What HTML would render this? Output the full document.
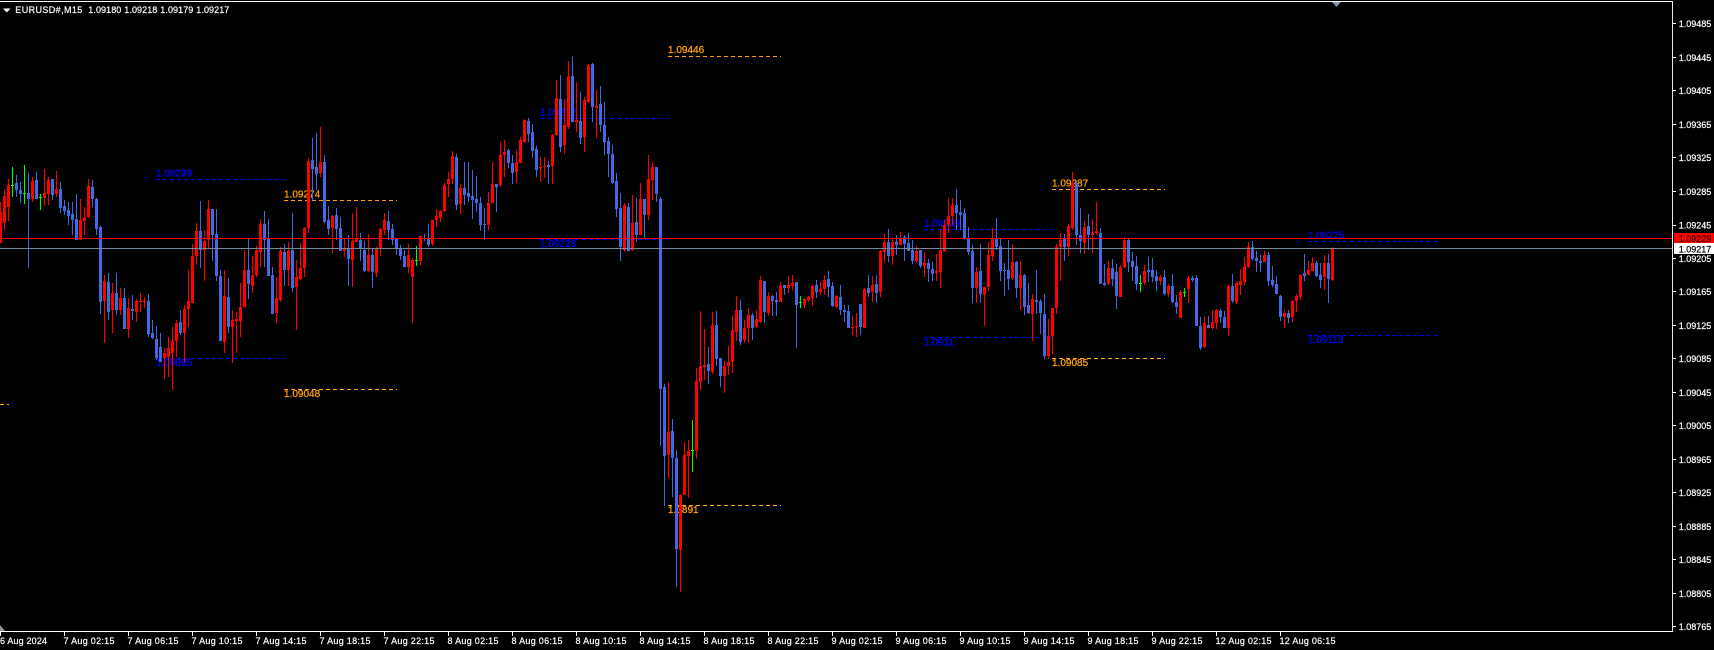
<!DOCTYPE html>
<html><head><meta charset="utf-8"><title>EURUSD#,M15</title>
<style>
html,body{margin:0;padding:0;background:#000;width:1714px;height:650px;overflow:hidden}
svg{display:block}
text{font-family:"Liberation Sans",sans-serif;font-size:9px;fill:currentColor;stroke:currentColor;stroke-width:.2}
.ax{color:#fff}
.lb text{font-size:10px;stroke-width:.25}
path{fill:none}
</style></head><body>
<svg width="1714" height="650" viewBox="0 0 1714 650" xmlns="http://www.w3.org/2000/svg">
<rect width="1714" height="650" fill="#000"/>

<g shape-rendering="crispEdges" stroke-dasharray="4 3" stroke-width="1">
<g stroke="#0000ff"><path d="M156 179.5H284M156 358.5H284M540 118.5H668M540 239.5H668M924 229.5H1052M924 337.5H1052M1308 241.5H1437M1308 335.5H1437"/></g>
<g stroke="#ffa500"><path d="M284 200.5H397M284 389.5H397M668 56.5H781M668 505.5H781M1052 189.5H1165M1052 358.5H1165M0 404.5H9"/></g>
</g>
<g class="lb" style="color:#0000ff">
<text x="156" y="176.5">1.09299</text><text x="156" y="366">1.09085</text><text x="540" y="115.5">1.09372</text><text x="540" y="247">1.09228</text><text x="924" y="226.5">1.09239</text><text x="924" y="345.5">1.0911</text><text x="1308" y="238.5">1.09225</text><text x="1308" y="343">1.09113</text>
</g>
<g class="lb" style="color:#ffa500">
<text x="284" y="197.5">1.09274</text><text x="284" y="397">1.09048</text><text x="668" y="53">1.09446</text><text x="668" y="513">1.0891</text><text x="1052" y="186.5">1.09287</text><text x="1052" y="366">1.09085</text>
</g>

<g shape-rendering="crispEdges" transform="translate(.5,0)">
<path stroke="#4169e1" stroke-width="1" d="M16 175V197M20 182V203M28 173V268M36 172V199M52 179V200M60 182V213M64 200V215M68 202V225M72 202V235M76 194V240M92 180V207M96 198V235M100 226V314M108 273V320M116 273V315M124 288V329M132 295V320M148 294V337M152 320V339M156 326V360M160 333V362M180 310V335M200 201V268M212 209V261M216 209V281M220 270V341M228 278V333M248 239V299M264 211V267M268 219V276M272 267V314M284 244V286M292 213V292M312 138V200M316 133V190M324 155V223M328 206V235M336 208V240M340 217V251M348 235V286M360 233V261M364 241V272M372 248V288M388 211V240M392 224V245M396 239V255M400 245V260M404 250V267M424 234V241M428 224V247M456 154V210M464 162V205M468 162V202M472 170V219M476 176V212M480 197V231M484 208V240M496 184V212M508 149V168M512 155V184M528 118V142M532 124V158M536 146V177M548 161V184M560 75V152M572 56V122M580 92V144M592 63V122M600 86V132M604 102V155M608 137V177M612 145V184M616 173V217M620 193V261M628 203V251M636 198V242M644 199V238M656 167V202M660 197V446M664 384V506M672 419V497M676 450V587M708 347V384M716 311V366M720 358V387M740 300V345M752 313V340M764 281V323M772 295V316M776 292V316M784 285V295M796 282V348M816 280V298M828 271V297M832 282V307M840 285V315M844 305V322M848 305V328M860 304V335M868 275V297M876 275V303M888 229V262M896 235V255M904 235V261M908 233V251M912 240V264M920 250V268M928 259V282M932 262V281M956 189V230M960 200V230M964 208V240M968 227V255M972 245V303M980 244V303M996 218V250M1000 239V281M1004 263V296M1008 240V290M1016 261V298M1024 274V315M1028 283V314M1036 270V314M1040 299V334M1044 294V359M1064 234V261M1076 182V245M1080 208V253M1088 214V250M1100 228V284M1104 264V286M1112 259V286M1116 264V309M1128 239V272M1132 252V281M1136 256V290M1148 257V282M1152 258V282M1156 270V291M1164 270V295M1172 274V303M1176 295V314M1192 276V282M1196 275V326M1200 317V350M1208 316V328M1220 309V323M1224 311V328M1232 274V303M1252 241V260M1256 251V272M1260 255V272M1268 252V286M1272 266V287M1276 276V294M1280 295V321M1288 310V323M1304 254V281M1316 261V277M1320 263V288M1328 254V303"/>
<path stroke="#4169e1" stroke-width="3" d="M16 183V190M20 190V194M28 193V199M36 180V199M52 179V195M60 189V208M64 206V211M68 210V216M72 214V220M76 219V240M92 187V199M96 199V229M100 227V302M108 282V312M116 293V310M124 298V329M132 309V311M148 301V334M152 333V338M156 339V358M160 347V362M180 322V333M200 231V250M212 209V235M216 234V276M220 276V341M228 297V327M248 270V284M264 224V240M268 239V276M272 275V314M284 252V270M292 250V288M312 160V169M316 167V174M324 162V222M328 220V229M336 215V229M340 228V251M348 248V259M360 240V249M364 250V271M372 255V272M388 221V230M392 229V240M396 239V248M400 248V256M404 256V267M424 238V239M428 239V245M456 157V205M464 188V195M468 193V197M472 196V200M476 199V203M480 203V225M484 224V225M496 184V187M508 150V163M512 163V173M528 121V134M532 132V151M536 149V170M548 165V167M560 99V147M572 76V122M580 121V138M592 64V107M600 104V125M604 125V142M608 141V154M612 154V183M616 181V209M620 208V247M628 207V251M636 222V235M644 199V215M656 167V194M660 199V389M664 387V456M672 431V458M676 458V549M708 364V371M716 325V359M720 358V376M740 310V342M752 315V328M764 281V312M772 296V301M776 300V302M784 285V288M796 282V305M816 285V292M828 279V287M832 286V306M840 297V310M844 310V312M848 311V328M860 304V327M868 288V293M876 284V293M888 242V256M896 242V245M904 237V244M908 243V251M912 250V261M920 250V266M928 263V269M932 269V274M956 205V213M960 212V215M964 213V239M968 238V252M972 251V288M980 271V294M996 238V247M1000 246V271M1004 270V271M1008 270V279M1016 262V288M1024 275V307M1028 305V313M1036 300V302M1040 301V313M1044 314V356M1064 239V247M1076 183V235M1080 235V241M1088 226V235M1100 233V284M1104 283V285M1112 268V279M1116 272V296M1128 240V262M1132 261V267M1136 266V284M1148 270V272M1152 270V277M1156 276V281M1164 277V294M1172 286V302M1176 302V307M1192 278V280M1196 278V326M1200 326V348M1208 325V328M1220 311V317M1224 317V328M1232 286V301M1252 247V259M1256 258V261M1260 261V263M1268 255V281M1272 280V285M1276 284V294M1280 296V317M1288 313V318M1304 273V276M1316 263V276M1320 275V280M1328 263V279"/>
<path stroke="#ff0000" stroke-width="1" d="M0 202V243M4 190V230M8 179V221M32 177V202M44 169V206M48 177V205M56 171V197M80 199V240M84 207V235M88 179V218M104 275V343M112 283V333M120 288V315M128 298V338M136 299V322M140 293V312M144 297V308M164 348V379M168 337V377M172 327V390M176 320V357M184 305V362M188 270V327M192 244V303M196 223V265M204 230V281M208 200V248M224 270V353M232 310V363M236 312V353M240 283V337M244 250V307M252 256V293M256 246V277M260 219V267M276 277V323M280 247V302M288 242V286M296 260V330M300 243V280M304 227V277M308 158V233M320 127V177M332 215V253M344 238V257M352 213V287M356 207V242M368 234V272M376 247V277M380 228V256M384 213V235M408 244V273M412 258V323M420 235V265M432 220V246M436 209V227M440 210V222M444 183V212M448 172V197M452 151V184M460 184V214M488 192V230M492 162V203M500 142V187M504 140V177M516 150V183M520 137V163M524 119V143M540 157V182M544 157V178M552 134V184M556 80V136M564 99V154M568 61V129M576 82V132M584 97V152M588 64V103M596 90V138M624 203V252M632 195V251M640 183V235M648 155V220M652 162V200M668 382V478M680 494V592M684 442V495M688 440V498M696 368V459M700 311V390M704 329V380M712 312V374M724 361V393M728 346V375M732 316V373M736 296V341M744 320V343M748 308V343M756 310V328M760 276V323M768 292V316M780 282V302M788 276V293M792 275V290M804 298V308M808 296V302M812 285V306M820 282V295M824 275V295M836 295V308M852 316V335M856 313V337M864 288V328M872 276V302M880 250V297M884 234V262M892 238V265M900 232V245M916 246V263M924 252V277M936 254V281M940 230V288M944 220V252M948 198V233M952 198V225M976 267V303M984 287V326M988 242V291M992 228V261M1012 244V280M1020 261V310M1032 294V341M1048 319V359M1052 308V354M1056 244V314M1060 233V281M1068 224V256M1072 172V230M1084 221V254M1092 219V253M1096 202V235M1108 261V285M1120 265V297M1124 237V268M1144 265V285M1160 275V285M1168 284V297M1180 290V318M1188 276V303M1204 316V348M1212 310V330M1216 309V329M1228 285V336M1236 281V304M1240 269V295M1244 257V285M1248 242V268M1264 251V262M1284 310V328M1292 300V322M1296 294V312M1300 274V300M1308 261V275M1312 257V271M1324 255V290M1332 247V281"/>
<path stroke="#ff0000" stroke-width="3" d="M0 212V243M4 196V223M8 185V207M32 181V199M44 193V198M48 180V194M56 189V194M80 220V240M84 217V221M88 186V217M104 281V301M112 293V310M120 298V310M128 308V329M136 301V312M140 301V302M144 301V302M164 353V358M168 348V357M172 341V353M176 323V341M184 309V333M188 301V309M192 256V303M196 231V256M204 241V250M208 209V240M224 296V342M232 320V327M236 319V321M240 307V321M244 270V307M252 275V286M256 250V275M260 224V252M276 298V313M280 251V300M288 251V270M296 277V287M300 268V279M304 228V268M308 161V228M320 162V173M332 216V228M344 248V251M352 241V260M356 239V242M368 255V271M376 249V273M380 229V249M384 220V230M408 255V267M412 260V277M420 236V261M432 220V244M436 216V220M440 211V218M444 185V211M448 179V184M452 156V179M460 188V204M488 203V225M492 184V203M500 155V185M504 152V155M516 162V172M520 140V163M524 120V142M540 167V168M544 166V167M552 135V166M556 98V135M564 125V145M568 76V127M576 120V122M584 100V137M588 65V102M596 106V108M624 205V250M632 223V250M640 199V235M648 179V215M652 167V180M668 432V455M680 495V550M684 455V495M688 451V456M696 381V451M700 366V382M704 365V367M712 325V372M724 366V376M728 362V366M732 330V362M736 310V332M744 328V340M748 315V328M756 319V327M760 280V322M768 296V313M780 286V302M788 285V288M792 283V286M804 299V305M808 297V300M812 286V298M820 289V292M824 280V289M836 296V307M852 327V328M856 326V327M864 289V328M872 285V292M880 251V292M884 242V252M892 242V256M900 238V245M916 251V261M924 263V266M936 271V273M940 250V272M944 225V251M948 216V225M952 205V216M976 272V288M984 287V295M988 255V287M992 238V256M1012 262V278M1020 275V288M1032 299V314M1048 336V356M1052 308V336M1056 247V308M1060 240V247M1068 226V247M1072 183V228M1084 227V243M1092 233V235M1096 231V233M1108 268V284M1120 267V297M1124 240V267M1144 271V283M1160 277V281M1168 286V294M1180 292V318M1188 278V289M1204 323V347M1212 322V328M1216 310V323M1228 286V328M1236 283V302M1240 281V285M1244 266V282M1248 247V267M1264 255V262M1284 313V317M1292 301V317M1296 296V301M1300 275V297M1308 270V275M1312 263V271M1324 263V277M1332 248V280"/>
<path stroke="#00ff00" stroke-width="1" d="M12 167V197M24 165V204M40 194V210M416 246V266M692 420V472M800 296V308M1140 275V292M1184 288V297"/>
<path stroke="#00ff00" stroke-width="3" d="M12 185V186M24 193V194M40 197V198M416 260V261M692 450V451M800 302V303M1140 283V284M1184 292V293"/>
</g>

<g shape-rendering="crispEdges">
<rect x="0" y="238" width="1673" height="1" fill="#ff0000"/>
<rect x="0" y="248" width="1673" height="1" fill="#778899"/>
<rect x="0" y="1" width="1673" height="1" fill="#fff"/>
<rect x="1672" y="1" width="1" height="631" fill="#e8e8e8"/>
<rect x="0" y="631" width="1673" height="1" fill="#fff"/>
<path stroke="#fff" d="M1673 23.5h3M1673 57.5h3M1673 90.5h3M1673 124.5h3M1673 157.5h3M1673 191.5h3M1673 225.5h3M1673 258.5h3M1673 291.5h3M1673 325.5h3M1673 358.5h3M1673 392.5h3M1673 425.5h3M1673 459.5h3M1673 492.5h3M1673 526.5h3M1673 559.5h3M1673 593.5h3M1673 626.5h3M.5 632V636M64.5 632V636M128.5 632V636M192.5 632V636M256.5 632V636M320.5 632V636M384.5 632V636M448.5 632V636M512.5 632V636M576.5 632V636M640.5 632V636M704.5 632V636M768.5 632V636M832.5 632V636M896.5 632V636M960.5 632V636M1024.5 632V636M1088.5 632V636M1152.5 632V636M1216.5 632V636M1280.5 632V636"/>
<rect x="1674" y="233" width="40" height="10" fill="#ff0000"/>
<rect x="1674" y="243" width="40" height="11" fill="#fff"/>
</g>
<polygon points="1332,2 1341,2 1336.5,7" fill="#8495a5"/>
<polygon points="0,625 5,631 0,631" fill="#8a95a0"/>
<polygon points="3,8.5 10.5,8.5 6.75,12.5" fill="#fff"/>

<g class="ax">
<text x="15.3" y="13" textLength="67" lengthAdjust="spacing">EURUSD#,M15</text>
<text x="88.3" y="13" textLength="33" lengthAdjust="spacing">1.09180</text>
<text x="124.3" y="13" textLength="33" lengthAdjust="spacing">1.09218</text>
<text x="160.3" y="13" textLength="33" lengthAdjust="spacing">1.09179</text>
<text x="196.3" y="13" textLength="33" lengthAdjust="spacing">1.09217</text>

<text x="1678.7" y="27">1.09485</text><text x="1678.7" y="61">1.09445</text><text x="1678.7" y="94">1.09405</text><text x="1678.7" y="128">1.09365</text><text x="1678.7" y="161">1.09325</text><text x="1678.7" y="195">1.09285</text><text x="1678.7" y="228.5">1.09245</text><text x="1678.7" y="262">1.09205</text><text x="1678.7" y="295">1.09165</text><text x="1678.7" y="329">1.09125</text><text x="1678.7" y="362">1.09085</text><text x="1678.7" y="396">1.09045</text><text x="1678.7" y="429">1.09005</text><text x="1678.7" y="463">1.08965</text><text x="1678.7" y="496">1.08925</text><text x="1678.7" y="530">1.08885</text><text x="1678.7" y="563">1.08845</text><text x="1678.7" y="597">1.08805</text><text x="1678.7" y="630">1.08765</text>
<text x="1678.7" y="242" style="color:#300">1.09229</text>
<text x="1678.7" y="252.5" style="color:#000">1.09217</text>

<text x="0" y="644" textLength="47" lengthAdjust="spacing">6 Aug 2024</text>
<text x="63.5" y="644" textLength="51" lengthAdjust="spacing">7 Aug 02:15</text>
<text x="127.5" y="644" textLength="51" lengthAdjust="spacing">7 Aug 06:15</text>
<text x="191.5" y="644" textLength="51" lengthAdjust="spacing">7 Aug 10:15</text>
<text x="255.5" y="644" textLength="51" lengthAdjust="spacing">7 Aug 14:15</text>
<text x="319.5" y="644" textLength="51" lengthAdjust="spacing">7 Aug 18:15</text>
<text x="383.5" y="644" textLength="51" lengthAdjust="spacing">7 Aug 22:15</text>
<text x="447.5" y="644" textLength="51" lengthAdjust="spacing">8 Aug 02:15</text>
<text x="511.5" y="644" textLength="51" lengthAdjust="spacing">8 Aug 06:15</text>
<text x="575.5" y="644" textLength="51" lengthAdjust="spacing">8 Aug 10:15</text>
<text x="639.5" y="644" textLength="51" lengthAdjust="spacing">8 Aug 14:15</text>
<text x="703.5" y="644" textLength="51" lengthAdjust="spacing">8 Aug 18:15</text>
<text x="767.5" y="644" textLength="51" lengthAdjust="spacing">8 Aug 22:15</text>
<text x="831.5" y="644" textLength="51" lengthAdjust="spacing">9 Aug 02:15</text>
<text x="895.5" y="644" textLength="51" lengthAdjust="spacing">9 Aug 06:15</text>
<text x="959.5" y="644" textLength="51" lengthAdjust="spacing">9 Aug 10:15</text>
<text x="1023.5" y="644" textLength="51" lengthAdjust="spacing">9 Aug 14:15</text>
<text x="1087.5" y="644" textLength="51" lengthAdjust="spacing">9 Aug 18:15</text>
<text x="1151.5" y="644" textLength="51" lengthAdjust="spacing">9 Aug 22:15</text>
<text x="1215.5" y="644" textLength="56" lengthAdjust="spacing">12 Aug 02:15</text>
<text x="1279.5" y="644" textLength="56" lengthAdjust="spacing">12 Aug 06:15</text>
</g>
</svg>
</body></html>
